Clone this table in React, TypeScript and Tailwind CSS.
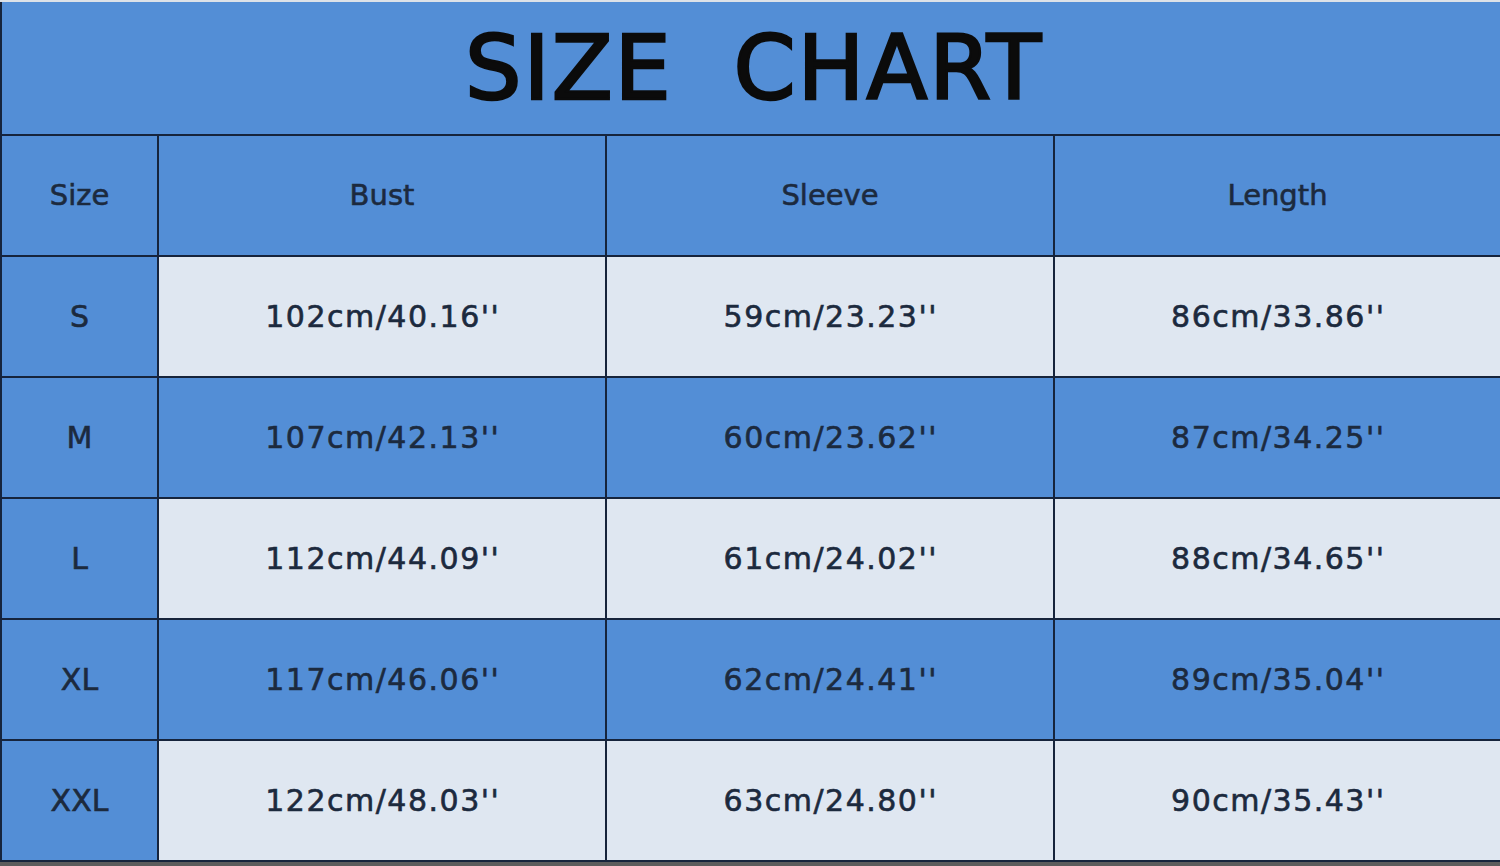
import React from "react";

const header = ["Size", "Bust", "Sleeve", "Length"];
const rows: string[][] = [
  ["S", "102cm/40.16''", "59cm/23.23''", "86cm/33.86''"],
  ["M", "107cm/42.13''", "60cm/23.62''", "87cm/34.25''"],
  ["L", "112cm/44.09''", "61cm/24.02''", "88cm/34.65''"],
  ["XL", "117cm/46.06''", "62cm/24.41''", "89cm/35.04''"],
  ["XXL", "122cm/48.03''", "63cm/24.80''", "90cm/35.43''"],
];

export default function App() {
  return (
    <div
      className="w-[1500px] h-[866px] overflow-hidden flex flex-col bg-[#5c5c5c]"
      style={{ fontFamily: '"DejaVu Sans", "Liberation Sans", sans-serif' }}
    >
      <div className="h-[2px] bg-[#dde2e8]" />
      <div className="h-[132px] bg-[#538ed6] border-l-2 border-[#16243c] flex items-center justify-center">
        <span className="text-[89px] leading-none tracking-[2px] text-[#0b0b0b] whitespace-pre [-webkit-text-stroke:2.5px_#0b0b0b] pl-[6px]">
          SIZE  CHART
        </span>
      </div>
      <div className="grid grid-cols-[155px_446px_446px_445px] grid-rows-[repeat(6,119px)] gap-[2px] py-[2px] pl-[2px] bg-[#16243c]">
        {header.map((h) => (
          <div
            key={h}
            className="bg-[#538ed6] flex items-center justify-center text-[29px] text-[#1c2a3e] [-webkit-text-stroke:0.6px_#1c2a3e]"
          >
            {h}
          </div>
        ))}
        {rows.map((r, i) =>
          r.map((c, j) => (
            <div
              key={i + "-" + j}
              className={
                "flex items-center justify-center text-[30px] text-[#1c2a3e] [-webkit-text-stroke:0.6px_#1c2a3e] " +
                (j === 0 ? "" : "tracking-[1.5px] pl-[1.5px] ") +
                (j === 0 || i % 2 === 1 ? "bg-[#538ed6]" : "bg-[#dfe7f1]")
              }
            >
              {c}
            </div>
          ))
        )}
      </div>
    </div>
  );
}
